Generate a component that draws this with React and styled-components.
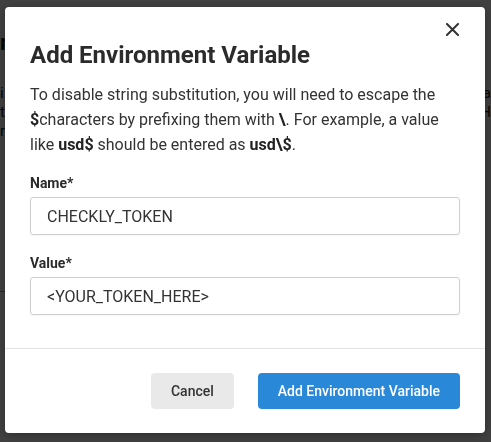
import React from "react";
import styled, { createGlobalStyle } from "styled-components";

const Global = createGlobalStyle`
  html, body { margin: 0; padding: 0; }
  body {
    font-family: Roboto, "Liberation Sans", Arial, sans-serif;
    color: #333;
    background: #fff;
    overflow: hidden;
  }
  * { box-sizing: border-box; }
`;

const Page = styled.div`
  width: 491px;
  height: 442px;
  overflow: hidden;
  display: flex;
  justify-content: space-between;
  padding-top: 30px;
`;

const PageColumn = styled.div`
  width: 6px;
  overflow: hidden;
  display: flex;
  flex-direction: column;
  align-items: ${(p) => (p.$right ? "flex-end" : "flex-start")};
  font-size: 15px;
  line-height: 19px;
  color: #222;
`;

const PageHeading = styled.div`
  font-size: 22px;
  font-weight: 700;
  line-height: 26px;
  margin-bottom: 28px;
`;

const PageRule = styled.div`
  width: 6px;
  height: 1px;
  background: #999;
  margin-top: ${(p) => p.$mt || 0}px;
`;

const Overlay = styled.div`
  position: fixed;
  inset: 0;
  background: rgba(0, 0, 0, 0.75);
  display: flex;
  align-items: flex-start;
  justify-content: flex-start;
  padding: 7px 0 0 5px;
`;

const Modal = styled.div`
  width: 480px;
  height: 426px;
  background: #fff;
  border-radius: 4px;
  display: flex;
  flex-direction: column;
  box-shadow: 0 2px 10px rgba(0, 0, 0, 0.3);
`;

const Header = styled.div`
  display: flex;
  align-items: flex-start;
  justify-content: space-between;
  padding: 34px 25px 0 25px;
`;

const Title = styled.h2`
  margin: 0;
  font-size: 24px;
  line-height: 28px;
  font-weight: 700;
  color: #2b2b2b;
`;

const CloseButton = styled.button`
  border: 0;
  background: none;
  padding: 0;
  margin: -24px -4px 0 0;
  width: 24px;
  height: 24px;
  display: flex;
  align-items: center;
  justify-content: center;
  cursor: pointer;
  color: #333;
`;

const Body = styled.div`
  flex: 1;
  padding: 13px 25px 0 25px;
  display: flex;
  flex-direction: column;
`;

const Description = styled.p`
  margin: 0 0 16px 0;
  font-size: 16px;
  line-height: 25px;
  color: #333;
  b { font-weight: 700; color: #222; }
`;

const Field = styled.div`
  display: flex;
  flex-direction: column;
  gap: 4px;
  margin-bottom: 18px;
`;

const Label = styled.label`
  font-size: 14px;
  line-height: 20px;
  font-weight: 700;
  color: #2b2b2b;
`;

const Input = styled.div`
  height: 38px;
  border: 1px solid #cfcfcf;
  border-radius: 3px;
  padding: 0 16px;
  display: flex;
  align-items: center;
  font-size: 16px;
  color: #333;
  box-shadow: 0 1px 2px rgba(0, 0, 0, 0.04);
`;

const Footer = styled.div`
  border-top: 1px solid #e2e2e2;
  padding: 24px 25px 24px 25px;
  display: flex;
  justify-content: flex-end;
  gap: 24px;
`;

const Button = styled.button`
  height: 36px;
  border: 0;
  border-radius: 4px;
  padding: 0 20px;
  font-family: inherit;
  font-size: 14px;
  font-weight: 500;
  background: ${(p) => (p.$primary ? "#2a88d8" : "#e9e9e9")};
  color: ${(p) => (p.$primary ? "#fff" : "#333")};
  cursor: pointer;
`;

export default function App() {
  return (
    <>
      <Global />
      <Page>
        <PageColumn>
          <PageHeading>r</PageHeading>
          <div>i</div>
          <div>tl</div>
          <div>r</div>
          <PageRule $mt={150} />
        </PageColumn>
        <PageColumn $right>
          <PageHeading>&nbsp;</PageHeading>
          <div>a</div>
          <div>H</div>
        </PageColumn>
      </Page>
      <Overlay>
        <Modal>
          <Header>
            <Title>Add Environment Variable</Title>
            <CloseButton aria-label="Close">
              <svg width="13" height="13" viewBox="0 0 13 13">
                <path d="M1 1L12 12M12 1L1 12" stroke="#333" strokeWidth="2" strokeLinecap="square" />
              </svg>
            </CloseButton>
          </Header>
          <Body>
            <Description>
              To disable string substitution, you will need to escape the <b>$</b>characters by prefixing them with <b>\</b>. For example, a value like <b>usd$</b> should be entered as <b>usd\$</b>.
            </Description>
            <Field>
              <Label>Name*</Label>
              <Input>CHECKLY_TOKEN</Input>
            </Field>
            <Field>
              <Label>Value*</Label>
              <Input>&lt;YOUR_TOKEN_HERE&gt;</Input>
            </Field>
          </Body>
          <Footer>
            <Button>Cancel</Button>
            <Button $primary>Add Environment Variable</Button>
          </Footer>
        </Modal>
      </Overlay>
    </>
  );
}
